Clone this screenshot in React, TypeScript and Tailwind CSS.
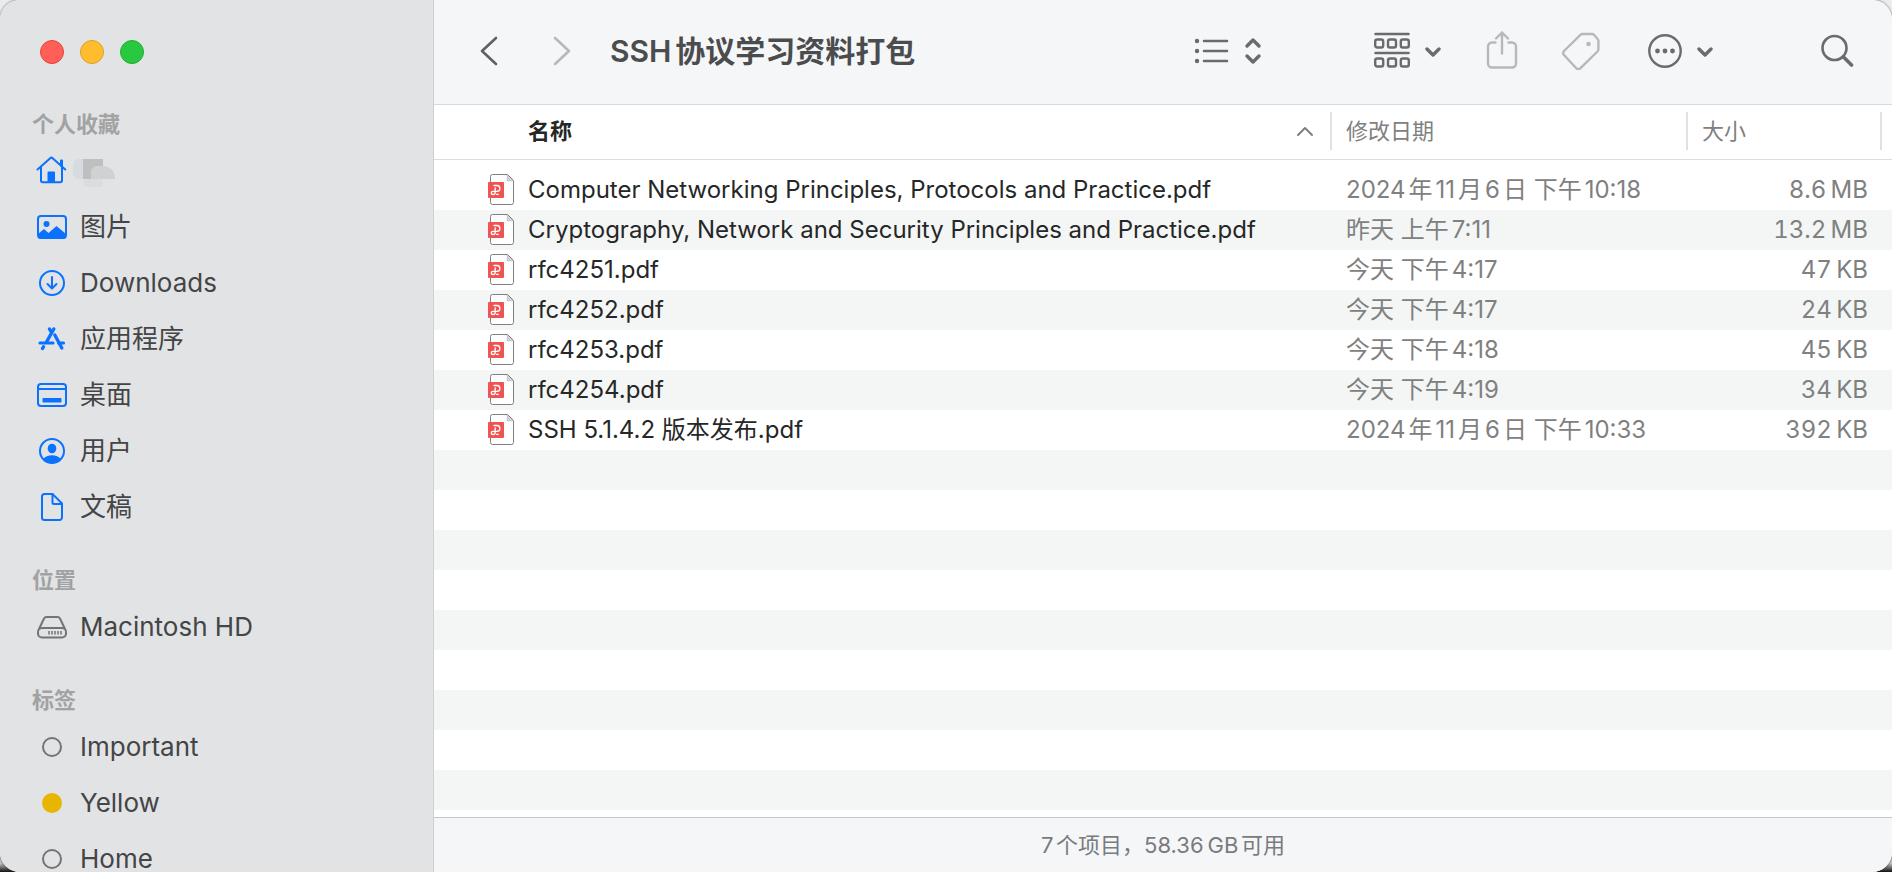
import type { ReactNode } from "react";

const files = [
  { name: "Computer Networking Principles, Protocols and Practice.pdf", date: "2024年11月6日 下午10:18", size: "8.6\u2009MB" },
  { name: "Cryptography, Network and Security Principles and Practice.pdf", date: "昨天 上午7:11", size: "13.2\u2009MB" },
  { name: "rfc4251.pdf", date: "今天 下午4:17", size: "47\u2009KB" },
  { name: "rfc4252.pdf", date: "今天 下午4:17", size: "24\u2009KB" },
  { name: "rfc4253.pdf", date: "今天 下午4:18", size: "45\u2009KB" },
  { name: "rfc4254.pdf", date: "今天 下午4:19", size: "34\u2009KB" },
  { name: "SSH 5.1.4.2 版本发布.pdf", date: "2024年11月6日 下午10:33", size: "392\u2009KB" },
];

function Icon({ w, h, className = "", children }: { w: number; h: number; className?: string; children: ReactNode }) {
  return (
    <svg
      width={w}
      height={h}
      viewBox={`0 0 ${w} ${h}`}
      fill="none"
      stroke="currentColor"
      strokeWidth="2"
      strokeLinecap="round"
      strokeLinejoin="round"
      className={`shrink-0 ${className}`}
      aria-hidden="true"
    >
      {children}
    </svg>
  );
}

const HomeIcon = () => (
  <Icon w={32} h={32}>
    <path d="M1.500 14.500 14.200 3.200a1.800 1.800 0 0 1 2.400 0L29.300 14.500M5 12v13.500a1.700 1.700 0 0 0 1.700 1.700h17.600a1.700 1.700 0 0 0 1.700-1.700V5.500" />
    <path d="M11.500 27V17.500a1 1 0 0 1 1-1h5.500a1 1 0 0 1 1 1V27z" fill="currentColor" stroke="none" />
    <path d="M25 5.500v5" />
  </Icon>
);

const PictureIcon = () => (
  <Icon w={32} h={32}>
    <rect x="2" y="5" width="28" height="22" rx="3" />
    <circle cx="10.500" cy="13" r="3" fill="currentColor" stroke="none" />
    <path d="m2 23 6-5 4.500 4 8-7L30 23v2a3 3 0 0 1-3 3H5a3 3 0 0 1-3-3z" fill="currentColor" stroke="none" />
  </Icon>
);

const DownloadIcon = () => (
  <Icon w={32} h={32}>
    <circle cx="16" cy="16" r="12" />
    <path d="M16 10v11M11.500 17l4.500 4.500 4.500-4.500" />
  </Icon>
);

const AppsIcon = () => (
  <Icon w={32} h={32}>
    <path d="M17.800 6 10.500 19M13.500 6l2 3.500M18.800 12l7 13M6.500 25.500l1-1.700" strokeWidth="3.400" />
    <path d="M4 20h13M22.500 20H27.500" strokeWidth="3.200" />
  </Icon>
);

const DesktopIcon = () => (
  <Icon w={32} h={32}>
    <rect x="2" y="5" width="28" height="22" rx="3" />
    <path d="M2 10h28" />
    <rect x="6.500" y="19" width="19" height="4.500" rx="0.800" fill="currentColor" stroke="none" />
  </Icon>
);

const UserIcon = () => (
  <Icon w={32} h={32}>
    <circle cx="16" cy="16" r="12" />
    <ellipse cx="16" cy="13.500" rx="4.300" ry="4.800" fill="currentColor" stroke="none" />
    <path d="M7.500 24c1.500-2.700 5-3.800 8.500-3.800s7 1.100 8.500 3.800c-2 2.500-5 4-8.500 4s-6.500-1.500-8.500-4z" fill="currentColor" stroke="none" />
  </Icon>
);

const DocumentIcon = () => (
  <Icon w={32} h={32}>
    <path d="M8.500 3H16.500L26 12.500V26.500a2.500 2.500 0 0 1-2.500 2.500H8.500A2.500 2.500 0 0 1 6 26.500V5.500A2.500 2.500 0 0 1 8.500 3z" />
    <path d="M16.500 3.500v8a1.500 1.500 0 0 0 1.500 1.500h8" />
  </Icon>
);

const DiskIcon = () => (
  <Icon w={32} h={32}>
    <path d="M3 18 8 7.500A3 3 0 0 1 10.500 6h11A3 3 0 0 1 24 7.500L29 18" />
    <rect x="2" y="17" width="28" height="9.500" rx="4" />
    <path d="M13 20v3.500M16 20v3.500M19 20v3.500M22 20v3.500M25 20v3.500" strokeWidth="1.500" strokeLinecap="butt" />
  </Icon>
);

const TagRing = ({ color }: { color?: string }) => (
  <Icon w={32} h={32}>
    {color ? <circle cx="16" cy="16" r="10" fill={color} stroke="none" /> : <circle cx="16" cy="16" r="9" />}
  </Icon>
);

const PdfIcon = () => (
  <svg width="28" height="32" viewBox="0 0 28 32" fill="none" aria-hidden="true" className="shrink-0">
    <path d="M4.500 0.500h15l6 6v22a2 2 0 0 1-2 2h-19a2 2 0 0 1-2-2v-26a2 2 0 0 1 2-2z" fill="#fff" stroke="#808080" />
    <path d="M19 1v6h6z" fill="#d2d2d2" stroke="#bdbdbd" strokeWidth="0.500" />
    <rect x="0" y="8" width="16" height="16" rx="1" fill="#ee5451" />
    <path
      d="M6 11.500h3a2.900 2.900 0 0 1 0 5.800H4.900a1.600 1.600 0 0 0 0 3.200c1.500 0 2.300-.7 2.300-2V13.800M8.500 20.300h1.800"
      stroke="#fff"
      strokeWidth="1.300"
      strokeLinecap="round"
    />
  </svg>
);

function SideItem({ icon, label, gray = false }: { icon: ReactNode; label: ReactNode; gray?: boolean }) {
  return (
    <li>
      <a href="#" className="flex h-14 items-center gap-3 pl-9">
        <span className={gray ? "text-[#737476]" : "text-[#0a72ff]"}>{icon}</span>
        {label}
      </a>
    </li>
  );
}

function SideSection({ title, className = "", children }: { title: string; className?: string; children: ReactNode }) {
  return (
    <section className={className}>
      <h2 className="mb-[3px] pl-8 text-[22px] leading-8 font-bold text-[#a1a2a3]">{title}</h2>
      <ul>{children}</ul>
    </section>
  );
}

function Sidebar() {
  return (
    <aside className="w-[434px] shrink-0 overflow-hidden border-r border-[#cfd0d2] bg-[#e2e3e5] text-[26px] leading-[26px] text-[#444546]">
      <div className="flex gap-4 pt-10 pb-11 pl-10">
        <button aria-label="关闭" className="size-6 rounded-full border border-[#e2463f] bg-[#ff5f57]" />
        <button aria-label="最小化" className="size-6 rounded-full border border-[#e0a028] bg-[#febc2e]" />
        <button aria-label="缩放" className="size-6 rounded-full border border-[#1fad34] bg-[#28c840]" />
      </div>
      <SideSection title="个人收藏">
        <SideItem
          icon={<HomeIcon />}
          label={
            <svg width="44" height="32" viewBox="0 0 44 32" aria-hidden="true" className="-ml-2">
              <rect x="1" y="4" width="16" height="20" rx="6" fill="#d5dbe1" />
              <rect x="11" y="24" width="20" height="8" rx="3" fill="#dbdcdd" />
              <rect x="11" y="4" width="20" height="20" fill="#bebfc1" />
              <path d="M19 24v-7a6 6 0 0 1 6-6h6a12 12 0 0 1 12 13z" fill="#d0d1d3" />
            </svg>
          }
        />
        <SideItem icon={<PictureIcon />} label="图片" />
        <SideItem icon={<DownloadIcon />} label="Downloads" />
        <SideItem icon={<AppsIcon />} label="应用程序" />
        <SideItem icon={<DesktopIcon />} label="桌面" />
        <SideItem icon={<UserIcon />} label="用户" />
        <SideItem icon={<DocumentIcon />} label="文稿" />
      </SideSection>
      <SideSection title="位置" className="pt-[29px]">
        <SideItem icon={<DiskIcon />} label="Macintosh HD" gray />
      </SideSection>
      <SideSection title="标签" className="pt-[29px]">
        <SideItem icon={<TagRing />} label="Important" gray />
        <SideItem icon={<TagRing color="#e8b500" />} label="Yellow" gray />
        <SideItem icon={<TagRing />} label="Home" gray />
      </SideSection>
    </aside>
  );
}

function Toolbar() {
  return (
    <header className="flex h-[105px] shrink-0 items-center border-b border-[#d8d9da] bg-[#f5f6f8] pr-[38px] pb-[2px] pl-10 text-[#6a6b6d]">
      <button aria-label="后退" className="mr-8">
        <Icon w={32} h={32} className="text-[#5f6062]">
          <path d="M22 3 8 16l14 13" strokeWidth="2.600" />
        </Icon>
      </button>
      <button aria-label="前进" className="mr-8 ml-2">
        <Icon w={32} h={32} className="text-[#b7b8ba]">
          <path d="M9 3l14 13-14 13" strokeWidth="2.600" />
        </Icon>
      </button>
      <h1 className="grow text-3xl font-semibold text-[#4b4c4d] [text-autospace:normal]">SSH协议学习资料打包</h1>
      <button aria-label="显示方式" className="mr-28 flex items-center gap-[14px]">
        <Icon w={36} h={36}>
          <path d="M10 8h23M10 18h23M10 28h23" strokeWidth="2.600" />
          <path d="M3 8h.01M3 18h.01M3 28h.01" strokeWidth="4.400" />
        </Icon>
        <Icon w={18} h={36}>
          <path d="m3 13 6-6 6 6M3 23l6 6 6-6" strokeWidth="3.400" />
        </Icon>
      </button>
      <button aria-label="分组" className="mr-11 flex items-center gap-[14px]">
        <Icon w={36} h={40}>
          <path d="M1.500 3h33M1.500 22h33" strokeWidth="2.600" />
          <g strokeWidth="2.400">
            <rect x="1.200" y="8.500" width="8" height="8" rx="2" />
            <rect x="14" y="8.500" width="8" height="8" rx="2" />
            <rect x="26.800" y="8.500" width="8" height="8" rx="2" />
            <rect x="1.200" y="27.500" width="8" height="8" rx="2" />
            <rect x="14" y="27.500" width="8" height="8" rx="2" />
            <rect x="26.800" y="27.500" width="8" height="8" rx="2" />
          </g>
        </Icon>
        <Icon w={18} h={12}>
          <path d="m3 4 6 6 6-6" strokeWidth="3.400" />
        </Icon>
      </button>
      <button aria-label="共享" className="mr-11">
        <Icon w={32} h={40} className="text-[#b7b8ba]">
          <path d="M9.500 11.500H6a4 4 0 0 0-4 4v17a4 4 0 0 0 4 4h20a4 4 0 0 0 4-4v-17a4 4 0 0 0-4-4h-3.500M16 22.500V1.500M10 7.500 16 1.500l6 6" strokeWidth="2.400" />
        </Icon>
      </button>
      <button aria-label="标签" className="mr-12">
        <Icon w={38} h={38} className="text-[#b7b8ba]">
          <path d="M20.500 2h9.500a3 3 0 0 1 2 .8L35.600 7a3 3 0 0 1 .8 2v8.500a3 3 0 0 1-.9 2L18.500 36.200a3 3 0 0 1-4.200 0L2 23a3 3 0 0 1 0-4L18.400 2.900a3 3 0 0 1 2.100-.9z" strokeWidth="2.400" />
          <circle cx="26.500" cy="12" r="2.300" fill="currentColor" stroke="none" />
        </Icon>
      </button>
      <button aria-label="操作" className="mr-[106px] flex items-center gap-[14px]">
        <Icon w={34} h={34}>
          <circle cx="17" cy="17" r="15.700" strokeWidth="2.400" />
          <path d="M9.500 17h.01M17 17h.01M24.500 17h.01" strokeWidth="4.800" />
        </Icon>
        <Icon w={18} h={12}>
          <path d="m3 4 6 6 6-6" strokeWidth="3.400" />
        </Icon>
      </button>
      <button aria-label="搜索">
        <Icon w={34} h={36}>
          <circle cx="14.500" cy="15" r="12" strokeWidth="2.600" />
          <path d="m23.500 24 8 8" strokeWidth="3.600" />
        </Icon>
      </button>
    </header>
  );
}

function FileTable() {
  return (
    <div className="min-h-0 grow overflow-hidden bg-white">
      <table className="w-full table-fixed border-separate border-spacing-0">
        <thead className="text-left text-[22px] leading-8">
          <tr>
            <th className="border-b border-[#dcdddd] pt-[7px] pb-[9px] pl-[94px] font-semibold text-[#262727]">
              <div className="flex h-[38px] items-center justify-between border-r-2 border-[#e0e1e1] pr-4">
                名称
                <Icon w={18} h={12} className="text-[#7f8080]">
                  <path d="m2 10 7-7 7 7" />
                </Icon>
              </div>
            </th>
            <th className="w-[356px] border-b border-[#dcdddd] pt-[7px] pb-[9px] font-normal text-[#7f8080]">
              <div className="flex h-[38px] items-center border-r-2 border-[#e0e1e1] pl-[14px]">修改日期</div>
            </th>
            <th className="w-[204px] border-b border-[#dcdddd] pt-[7px] pr-[10px] pb-[9px] font-normal text-[#7f8080]">
              <div className="flex h-[38px] items-center border-r-2 border-[#e0e1e1] pl-[14px]">大小</div>
            </th>
          </tr>
        </thead>
        <tbody className="text-2xl text-[#7f8080] before:block before:h-[10px]">
          {files.map((file) => (
            <tr key={file.name} className="h-10 whitespace-nowrap even:bg-[#f4f6f5]">
              <td className="p-0 pl-[54px] text-[#262727]">
                <div className="flex h-10 items-center gap-3">
                  <PdfIcon />
                  {file.name}
                </div>
              </td>
              <td className="p-0 pl-[14px] [text-autospace:normal]">{file.date}</td>
              <td className="p-0 pr-6 text-right tabular-nums">{file.size}</td>
            </tr>
          ))}
          {Array.from({ length: 10 }, (_, i) => (
            <tr key={i} className="h-10 even:bg-[#f4f6f5]">
              <td colSpan={3} className="p-0" />
            </tr>
          ))}
        </tbody>
      </table>
    </div>
  );
}

export default function App() {
  return (
    <div className="h-screen overflow-hidden bg-[linear-gradient(#ececec,#c4c4c4_99%,#111_100%)] font-['Inter','Noto_Sans_CJK_SC',sans-serif]">
      <div className="flex h-full overflow-hidden rounded-[20px] bg-white shadow-[0_0_2px_1px_rgba(0,0,0,0.3)]">
        <Sidebar />
        <main className="flex min-w-0 grow flex-col">
          <Toolbar />
          <FileTable />
          <footer className="flex h-[55px] shrink-0 items-center justify-center border-t border-[#c6c7c9] bg-[#f5f6f8] text-[22px] text-[#7a7b7d] [text-autospace:normal]">
            7个项目，58.36{"\u2009"}GB可用
          </footer>
        </main>
      </div>
    </div>
  );
}
